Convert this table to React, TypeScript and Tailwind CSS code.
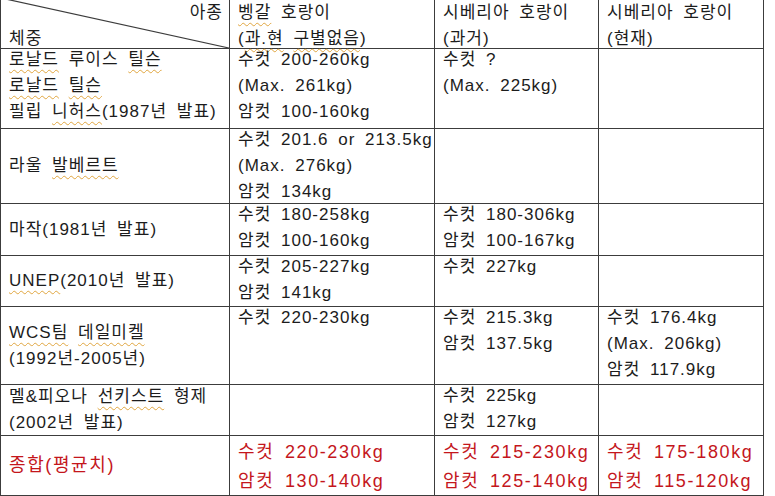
import type { ReactNode } from "react";

// spell-check squiggle under a word
const U = ({ children }: { children: ReactNode }) => (
    <span className="underline decoration-wavy decoration-[#e0a640] decoration-1 underline-offset-[4px]">{children}</span>
);

const Cell = ({ children, center = false, head = false, red = false }: { children?: ReactNode; center?: boolean; head?: boolean; red?: boolean }) => (
    <div
        className={`relative border-r border-b border-[#3c3c3c] pl-[8px] ${center ? "flex flex-col justify-center" : ""} ${red ? "text-[#c4161c] text-[18px] leading-[29px] tracking-[1.6px]" : "leading-[26px]"}`}
    >
        <div className={center ? "" : red ? "pt-[2px]" : head ? "pt-[2px]" : "-mt-[2px]"}>{children}</div>
    </div>
);

const L = ({ children }: { children?: ReactNode }) => <div className="whitespace-nowrap">{children}</div>;

export default function App() {
    return (
        <div className="w-[775px] h-[496px] overflow-hidden bg-white">
            <div
                className="-mt-[3px] grid w-[764px] grid-cols-[229px_205px_164px_165px] grid-rows-[51px_80px_75px_52px_51px_78px_51px_60px] border-l border-t border-[#3c3c3c] text-[17px] tracking-[1px] text-[#1c1c1c] [word-spacing:4px]"
                style={{ fontFamily: '"Liberation Sans", "Noto Sans CJK KR", sans-serif' }}
            >
                {/* header */}
                <div className="relative border-r border-b border-[#3c3c3c] pt-[2px] leading-[26px]">
                    <svg className="absolute inset-0 h-full w-full" preserveAspectRatio="none" viewBox="0 0 100 100">
                        <line x1="0" y1="0" x2="100" y2="100" stroke="#3c3c3c" strokeWidth="1.2" vectorEffect="non-scaling-stroke" />
                    </svg>
                    <div className="pr-[6px] text-right">아종</div>
                    <div className="pl-[8px]">체중</div>
                </div>
                <Cell head>
                    <L><U>벵갈</U> 호랑이</L>
                    <L>(<U>과.현</U> <U>구별없음</U>)</L>
                </Cell>
                <Cell head>
                    <L>시베리아 호랑이</L>
                    <L>(과거)</L>
                </Cell>
                <Cell head>
                    <L>시베리아 호랑이</L>
                    <L>(현재)</L>
                </Cell>

                {/* row 1 */}
                <Cell>
                    <L><U>로날드</U> 루이스 <U>틸슨</U></L>
                    <L><U>로날드</U> <U>틸슨</U></L>
                    <L>필립 <U>니허스</U>(1987년 발표)</L>
                </Cell>
                <Cell>
                    <L>수컷 200-260kg</L>
                    <L>(Max. 261kg)</L>
                    <L>암컷 100-160kg</L>
                </Cell>
                <Cell>
                    <L>수컷 ?</L>
                    <L>(Max. 225kg)</L>
                </Cell>
                <Cell />

                {/* row 2 */}
                <Cell center>
                    <L>라울 <U>발베르트</U></L>
                </Cell>
                <Cell>
                    <L>수컷 201.6 or 213.5kg</L>
                    <L>(Max. 276kg)</L>
                    <L>암컷 134kg</L>
                </Cell>
                <Cell />
                <Cell />

                {/* row 3 */}
                <Cell center>
                    <L>마작(1981년 발표)</L>
                </Cell>
                <Cell>
                    <L>수컷 180-258kg</L>
                    <L>암컷 100-160kg</L>
                </Cell>
                <Cell>
                    <L>수컷 180-306kg</L>
                    <L>암컷 100-167kg</L>
                </Cell>
                <Cell />

                {/* row 4 */}
                <Cell center>
                    <L><U>UNEP</U>(2010년 발표)</L>
                </Cell>
                <Cell>
                    <L>수컷 205-227kg</L>
                    <L>암컷 141kg</L>
                </Cell>
                <Cell>
                    <L>수컷 227kg</L>
                </Cell>
                <Cell />

                {/* row 5 */}
                <Cell center>
                    <L><U>WCS팀</U> <U>데일미켈</U></L>
                    <L>(1992년-2005년)</L>
                </Cell>
                <Cell>
                    <L>수컷 220-230kg</L>
                </Cell>
                <Cell>
                    <L>수컷 215.3kg</L>
                    <L>암컷 137.5kg</L>
                </Cell>
                <Cell>
                    <L>수컷 176.4kg</L>
                    <L>(Max. 206kg)</L>
                    <L>암컷 117.9kg</L>
                </Cell>

                {/* row 6 */}
                <Cell center>
                    <L>멜&amp;피오나 <U>선키스트</U> 형제</L>
                    <L>(2002년 발표)</L>
                </Cell>
                <Cell />
                <Cell>
                    <L>수컷 225kg</L>
                    <L>암컷 127kg</L>
                </Cell>
                <Cell />

                {/* summary */}
                <Cell center red>
                    <L>종합(평균치)</L>
                </Cell>
                <Cell red>
                    <L>수컷 220-230kg</L>
                    <L>암컷 130-140kg</L>
                </Cell>
                <Cell red>
                    <L>수컷 215-230kg</L>
                    <L>암컷 125-140kg</L>
                </Cell>
                <Cell red>
                    <L>수컷 175-180kg</L>
                    <L>암컷 115-120kg</L>
                </Cell>
            </div>
        </div>
    );
}
